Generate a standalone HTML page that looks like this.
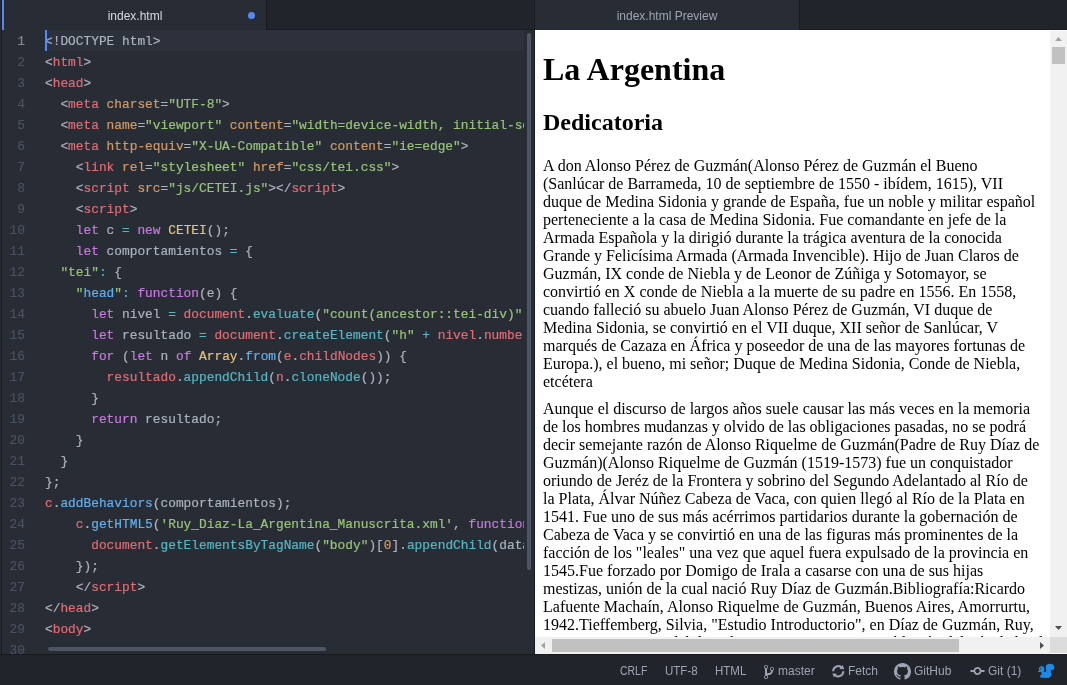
<!DOCTYPE html>
<html><head><meta charset="utf-8">
<style>
*{box-sizing:border-box}
html,body{margin:0;padding:0}
body{width:1067px;height:685px;overflow:hidden;background:#21252b;position:relative;font-family:"Liberation Sans",sans-serif}
.abs{position:absolute;will-change:transform}
#lstrip{left:0;top:0;width:2px;height:654px;background:#262a30;border-right:1px solid #1b1d22}
#tabbarL{left:2px;top:0;width:532px;height:30px;background:#21252b;border-bottom:1px solid #181a1f}
#tabL{left:2px;top:0;width:265px;height:30px;background:#282c34;border-right:1px solid #181a1f}
#tabLbar{left:2px;top:0;width:2px;height:30px;background:#568af2}
#tabLtxt{left:2.5px;width:264px;top:9px;text-align:center;color:#d7dae0;font-size:12px;line-height:14px}
#dot{left:247.5px;top:12px;width:7px;height:7px;border-radius:50%;background:#568af2}
#editor{left:2px;top:30px;width:532px;height:624px;background:#282c34;overflow:hidden}
#gutter{left:0;top:1px;width:23px;text-align:right;font-family:"Liberation Mono",monospace;font-size:12.83px;line-height:21px;color:#4b5263;-webkit-text-stroke:0.15px}
#gutter .gn.cur{color:#868c97}
#curline{left:43px;top:0;width:479px;height:21px;background:#2c313c}
#code{left:43px;top:1px;width:479px;height:624px;overflow:hidden;white-space:pre;font-family:"Liberation Mono",monospace;font-size:12.83px;line-height:21px;color:#abb2bf;-webkit-text-stroke:0.2px}
#cursor{left:43px;top:0;width:2px;height:21px;background:#528bff}
#vthumb{left:525px;top:3px;width:4px;height:537px;border-radius:2px;background:#4e5565}
#hthumb{left:46px;top:617px;width:278px;height:4px;border-radius:2px;background:#4e5565}
#divider{left:534px;top:0;width:1px;height:654px;background:#181a1f}
#tabbarR{left:535px;top:0;width:532px;height:30px;background:#21252b;border-bottom:1px solid #181a1f}
#tabR{left:535px;top:0;width:265px;height:30px;background:#282c34;border-right:1px solid #181a1f}
#tabRtxt{left:535px;width:264px;top:9px;text-align:center;color:#9da5b4;font-size:12px;line-height:14px}
#preview{left:535px;top:30px;width:532px;height:624px;background:#fff;overflow:hidden;font-family:"Liberation Serif",serif;color:#000}
#h1{left:8px;top:21px;font-size:32px;font-weight:bold;line-height:37px;white-space:nowrap}
#h2{left:8px;top:78px;font-size:24px;font-weight:bold;line-height:28px;white-space:nowrap}
.pl{position:absolute;left:0;white-space:nowrap;font-size:16px;line-height:18px}
#p1{left:8px;top:127px}
#p2{left:8px;top:370px}
#vsb{left:515px;top:1px;width:17px;height:606px;background:#f1f1f1}
#vsbthumb{left:517px;top:17px;width:13px;height:17px;background:#c1c1c1}
#hsb{left:0px;top:607px;width:515px;height:17px;background:#f1f1f1}
#hsbthumb{left:17px;top:609px;width:407px;height:13px;background:#c1c1c1}
#corner{left:515px;top:607px;width:17px;height:16px;background:#dcdcdc}
#status{left:0;top:654px;width:1067px;height:31px;background:#21252b;border-top:1px solid #181a1f;color:#9da5b4;font-size:12px}
.st{position:absolute;top:9px;line-height:14px;white-space:nowrap}
</style></head><body>
<div id="lstrip" class="abs"></div>
<div id="tabbarL" class="abs"></div>
<div id="tabL" class="abs"></div>
<div id="tabLbar" class="abs"></div>
<div id="tabLtxt" class="abs">index.html</div>
<div id="dot" class="abs"></div>
<div id="editor" class="abs">
  <div id="gutter" class="abs"><div class="gn cur">1</div><div class="gn">2</div><div class="gn">3</div><div class="gn">4</div><div class="gn">5</div><div class="gn">6</div><div class="gn">7</div><div class="gn">8</div><div class="gn">9</div><div class="gn">10</div><div class="gn">11</div><div class="gn">12</div><div class="gn">13</div><div class="gn">14</div><div class="gn">15</div><div class="gn">16</div><div class="gn">17</div><div class="gn">18</div><div class="gn">19</div><div class="gn">20</div><div class="gn">21</div><div class="gn">22</div><div class="gn">23</div><div class="gn">24</div><div class="gn">25</div><div class="gn">26</div><div class="gn">27</div><div class="gn">28</div><div class="gn">29</div><div class="gn">30</div></div>
  <div id="curline" class="abs"></div>
  <div id="code" class="abs"><div class="ln cur">&lt;!DOCTYPE html&gt;</div><div class="ln">&lt;<span style="color:#e06c75">html</span>&gt;</div><div class="ln">&lt;<span style="color:#e06c75">head</span>&gt;</div><div class="ln">  &lt;<span style="color:#e06c75">meta</span> <span style="color:#d19a66">charset</span>=<span style="color:#98c379">&quot;UTF-8&quot;</span>&gt;</div><div class="ln">  &lt;<span style="color:#e06c75">meta</span> <span style="color:#d19a66">name</span>=<span style="color:#98c379">&quot;viewport&quot;</span> <span style="color:#d19a66">content</span>=<span style="color:#98c379">&quot;width=device-width, initial-scale=1.0&quot;</span>&gt;</div><div class="ln">  &lt;<span style="color:#e06c75">meta</span> <span style="color:#d19a66">http-equiv</span>=<span style="color:#98c379">&quot;X-UA-Compatible&quot;</span> <span style="color:#d19a66">content</span>=<span style="color:#98c379">&quot;ie=edge&quot;</span>&gt;</div><div class="ln">    &lt;<span style="color:#e06c75">link</span> <span style="color:#d19a66">rel</span>=<span style="color:#98c379">&quot;stylesheet&quot;</span> <span style="color:#d19a66">href</span>=<span style="color:#98c379">&quot;css/tei.css&quot;</span>&gt;</div><div class="ln">    &lt;<span style="color:#e06c75">script</span> <span style="color:#d19a66">src</span>=<span style="color:#98c379">&quot;js/CETEI.js&quot;</span>&gt;&lt;/<span style="color:#e06c75">script</span>&gt;</div><div class="ln">    &lt;<span style="color:#e06c75">script</span>&gt;</div><div class="ln">    <span style="color:#c678dd">let</span> c <span style="color:#56b6c2">=</span> <span style="color:#c678dd">new</span> <span style="color:#e5c07b">CETEI</span>();</div><div class="ln">    <span style="color:#c678dd">let</span> comportamientos <span style="color:#56b6c2">=</span> {</div><div class="ln">  <span style="color:#98c379">&quot;tei&quot;</span><span style="color:#56b6c2">:</span> {</div><div class="ln">    <span style="color:#98c379">&quot;</span><span style="color:#61afef">head</span><span style="color:#98c379">&quot;</span><span style="color:#56b6c2">:</span> <span style="color:#c678dd">function</span>(e) {</div><div class="ln">      <span style="color:#c678dd">let</span> nivel <span style="color:#56b6c2">=</span> <span style="color:#e06c75">document</span>.<span style="color:#56b6c2">evaluate</span>(<span style="color:#98c379">&quot;count(ancestor::tei-div)&quot;</span>, this, null, XPathResult.ANY_TYPE, null);</div><div class="ln">      <span style="color:#c678dd">let</span> resultado <span style="color:#56b6c2">=</span> <span style="color:#e06c75">document</span>.<span style="color:#56b6c2">createElement</span>(<span style="color:#98c379">&quot;h&quot;</span> <span style="color:#56b6c2">+</span> <span style="color:#e06c75">nivel</span>.<span style="color:#e06c75">numberValue</span>);</div><div class="ln">      <span style="color:#c678dd">for</span> (<span style="color:#c678dd">let</span> n <span style="color:#c678dd">of</span> <span style="color:#e5c07b">Array</span>.<span style="color:#61afef">from</span>(<span style="color:#e06c75">e</span>.<span style="color:#e06c75">childNodes</span>)) {</div><div class="ln">        <span style="color:#e06c75">resultado</span>.<span style="color:#56b6c2">appendChild</span>(<span style="color:#e06c75">n</span>.<span style="color:#56b6c2">cloneNode</span>());</div><div class="ln">      }</div><div class="ln">      <span style="color:#c678dd">return</span> resultado;</div><div class="ln">    }</div><div class="ln">  }</div><div class="ln">};</div><div class="ln"><span style="color:#e06c75">c</span>.<span style="color:#61afef">addBehaviors</span>(comportamientos);</div><div class="ln">    <span style="color:#e06c75">c</span>.<span style="color:#61afef">getHTML5</span>(<span style="color:#98c379">&#x27;Ruy_Diaz-La_Argentina_Manuscrita.xml&#x27;</span>, <span style="color:#c678dd">function</span>(data) {</div><div class="ln">      <span style="color:#e06c75">document</span>.<span style="color:#56b6c2">getElementsByTagName</span>(<span style="color:#98c379">&quot;body&quot;</span>)[<span style="color:#d19a66">0</span>].<span style="color:#56b6c2">appendChild</span>(data);</div><div class="ln">    });</div><div class="ln">    &lt;/<span style="color:#e06c75">script</span>&gt;</div><div class="ln">&lt;/<span style="color:#e06c75">head</span>&gt;</div><div class="ln">&lt;<span style="color:#e06c75">body</span>&gt;</div><div class="ln"></div></div>
  <div id="cursor" class="abs"></div>
  <div id="vthumb" class="abs"></div>
  <div id="hthumb" class="abs"></div>
</div>
<div id="divider" class="abs"></div>
<div id="tabbarR" class="abs"></div>
<div id="tabR" class="abs"></div>
<div id="tabRtxt" class="abs">index.html Preview</div>
<div id="preview" class="abs">
  <div id="h1" class="abs">La Argentina</div>
  <div id="h2" class="abs">Dedicatoria</div>
  <div id="p1" class="abs"><div class="pl" style="top:0px">A don Alonso Pérez de Guzmán(Alonso Pérez de Guzmán el Bueno</div><div class="pl" style="top:18px">(Sanlúcar de Barrameda, 10 de septiembre de 1550 - ibídem, 1615), VII</div><div class="pl" style="top:36px">duque de Medina Sidonia y grande de España, fue un noble y militar español</div><div class="pl" style="top:54px">perteneciente a la casa de Medina Sidonia. Fue comandante en jefe de la</div><div class="pl" style="top:72px">Armada Española y la dirigió durante la trágica aventura de la conocida</div><div class="pl" style="top:90px">Grande y Felicísima Armada (Armada Invencible). Hijo de Juan Claros de</div><div class="pl" style="top:108px">Guzmán, IX conde de Niebla y de Leonor de Zúñiga y Sotomayor, se</div><div class="pl" style="top:126px">convirtió en X conde de Niebla a la muerte de su padre en 1556. En 1558,</div><div class="pl" style="top:144px">cuando falleció su abuelo Juan Alonso Pérez de Guzmán, VI duque de</div><div class="pl" style="top:162px">Medina Sidonia, se convirtió en el VII duque, XII señor de Sanlúcar, V</div><div class="pl" style="top:180px">marqués de Cazaza en África y poseedor de una de las mayores fortunas de</div><div class="pl" style="top:198px">Europa.), el bueno, mi señor; Duque de Medina Sidonia, Conde de Niebla,</div><div class="pl" style="top:216px">etcétera</div></div>
  <div id="p2" class="abs"><div class="pl" style="top:0px">Aunque el discurso de largos años suele causar las más veces en la memoria</div><div class="pl" style="top:18px">de los hombres mudanzas y olvido de las obligaciones pasadas, no se podrá</div><div class="pl" style="top:36px">decir semejante razón de Alonso Riquelme de Guzmán(Padre de Ruy Díaz de</div><div class="pl" style="top:54px">Guzmán)(Alonso Riquelme de Guzmán (1519-1573) fue un conquistador</div><div class="pl" style="top:72px">oriundo de Jeréz de la Frontera y sobrino del Segundo Adelantado al Río de</div><div class="pl" style="top:90px">la Plata, Álvar Núñez Cabeza de Vaca, con quien llegó al Río de la Plata en</div><div class="pl" style="top:108px">1541. Fue uno de sus más acérrimos partidarios durante la gobernación de</div><div class="pl" style="top:126px">Cabeza de Vaca y se convirtió en una de las figuras más prominentes de la</div><div class="pl" style="top:144px">facción de los &quot;leales&quot; una vez que aquel fuera expulsado de la provincia en</div><div class="pl" style="top:162px">1545.Fue forzado por Domigo de Irala a casarse con una de sus hijas</div><div class="pl" style="top:180px">mestizas, unión de la cual nació Ruy Díaz de Guzmán.Bibliografía:Ricardo</div><div class="pl" style="top:198px">Lafuente Machaín, Alonso Riquelme de Guzmán, Buenos Aires, Amorrurtu,</div><div class="pl" style="top:216px">1942.Tieffemberg, Silvia, &quot;Estudio Introductorio&quot;, en Díaz de Guzmán, Ruy,</div><div class="pl" style="top:234px">Argentina. Historia del descubrimiento, conquista y población del Río de la Plata</div></div>
  <div id="vsb" class="abs"></div>
  <div id="vsbthumb" class="abs"></div>
  <div id="hsb" class="abs"></div>
  <div id="hsbthumb" class="abs"></div>
  <div id="corner" class="abs"></div>
  <svg class="abs" style="left:0;top:0" width="532" height="624"><path d="M523.5 7L527 11H520Z" fill="#a3a3a3"/><path d="M520 596H527L523.5 600Z" fill="#505050"/><path d="M6 615.5L10 612V619Z" fill="#a3a3a3"/><path d="M505 612L509 615.5L505 619Z" fill="#505050"/></svg>
</div>
<div id="status" class="abs">
  <span class="st" style="left:620px;transform:scaleX(0.87);transform-origin:0 0">CRLF</span>
  <span class="st" style="left:665px;transform:scaleX(0.96);transform-origin:0 0">UTF-8</span>
  <span class="st" style="left:715px;transform:scaleX(0.96);transform-origin:0 0">HTML</span>
  <svg class="abs" style="left:763.5px;top:8.5px" width="10" height="16" viewBox="0 0 10 16"><path fill="#9da5b4" d="M10 5c0-1.11-.89-2-2-2a1.993 1.993 0 0 0-1 3.72v.3c-.02.52-.23.98-.63 1.38-.4.4-.86.61-1.38.63-.83.02-1.48.16-2 .45V4.72a1.993 1.993 0 0 0-1-3.72C.88 1 0 1.89 0 3a2 2 0 0 0 1 1.72v6.56c-.59.35-1 .99-1 1.72 0 1.11.89 2 2 2 1.11 0 2-.89 2-2 0-.53-.2-1-.53-1.36.09-.06.48-.41.59-.47.25-.11.56-.17.94-.17 1.05-.05 1.95-.45 2.75-1.25S8.95 7.770 9 6.73h-.02C9.59 6.37 10 5.730 10 5zM2 1.8c.66 0 1.2.55 1.2 1.2 0 .65-.55 1.2-1.2 1.2C1.35 4.2.8 3.65.8 3c0-.65.55-1.2 1.2-1.2zm0 12.41c-.66 0-1.2-.55-1.2-1.2 0-.65.55-1.2 1.2-1.2.65 0 1.2.55 1.2 1.2 0 .65-.55 1.2-1.2 1.2zm6-8c-.66 0-1.2-.55-1.2-1.2 0-.65.55-1.2 1.2-1.2.65 0 1.2.55 1.2 1.2 0 .65-.55 1.2-1.2 1.2z"/></svg>
  <span class="st" style="left:778px">master</span>
  <svg class="abs" style="left:831.7px;top:9.7px" width="13" height="13" viewBox="0 0 13 13"><g fill="none" stroke="#9da5b4" stroke-width="2"><path d="M1.15 6.25A5.1 5.1 0 0 1 10.16 2.97"/><path d="M11.35 6.25A5.1 5.1 0 0 1 2.34 9.53"/></g><g fill="#9da5b4"><path d="M10.6 0.1L12.2 4.2L7.4 4.0Z"/><path d="M0.39 8.56L1.85 12.2L5.06 8.86Z"/></g></svg>
  <span class="st" style="left:848px">Fetch</span>
  <svg class="abs" style="left:893.8px;top:8.1px" width="17" height="17" viewBox="0 0 16 16"><path fill="#9da5b4" d="M8 0C3.58 0 0 3.58 0 8c0 3.54 2.29 6.53 5.47 7.59.4.07.55-.17.55-.38 0-.19-.01-.82-.01-1.49-2.01.37-2.53-.49-2.69-.94-.09-.23-.48-.94-.82-1.13-.28-.15-.68-.52-.01-.53.63-.01 1.08.58 1.23.82.72 1.21 1.87.87 2.330.66.07-.52.28-.87.51-1.07-1.780-.2-3.640-.89-3.640-3.95 0-.87.31-1.59.82-2.15-.08-.2-.36-1.02.08-2.12 0 0 .67-.21 2.2.82.64-.18 1.32-.27 2-.27.68 0 1.36.09 2 .27 1.53-1.04 2.2-.82 2.2-.82.44 1.1.16 1.92.08 2.12.51.56.82 1.27.82 2.15 0 3.07-1.87 3.75-3.65 3.95.29.25.54.73.54 1.48 0 1.07-.01 1.93-.01 2.2 0 .21.15.46.55.38A8.013 8.013 0 0 0 16 8c0-4.42-3.58-8-8-8z"/></svg>
  <span class="st" style="left:914px">GitHub</span>
  <svg class="abs" style="left:970px;top:8px" width="15" height="16" viewBox="0 0 14 16"><path fill="#9da5b4" d="M10.86 7c-.45-1.72-2-3-3.86-3-1.86 0-3.41 1.28-3.86 3H0v2h3.14c.45 1.72 2 3 3.86 3 1.86 0 3.41-1.28 3.86-3H14V7h-3.14zM7 10.2c-1.22 0-2.2-.98-2.2-2.2 0-1.22.98-2.2 2.2-2.2 1.22 0 2.2.98 2.2 2.2 0 1.22-.98 2.2-2.2 2.2z"/></svg>
  <span class="st" style="left:988px">Git (1)</span>
  <svg class="abs" style="left:1037px;top:8px" width="18" height="16" viewBox="0 0 18 16"><g fill="#1b8ae8"><ellipse cx="13" cy="4.3" rx="4.3" ry="3.6"/><path d="M9.2 5L13.5 6.5L14.5 11.5L9 11Z"/><ellipse cx="9.5" cy="11.8" rx="5" ry="3"/><rect x="3.3" y="12" width="9" height="2.7"/><circle cx="4.6" cy="6.1" r="2.8"/><path d="M3.8 3.6L4.6 2.6L5.6 3.6Z"/><ellipse cx="2.2" cy="8.4" rx="1.5" ry="0.6"/><path d="M4 7L8 9L5 13Z"/></g><circle cx="14.8" cy="7.8" r="1.1" fill="#21252b"/><circle cx="3.6" cy="5.5" r="0.55" fill="#21252b"/></svg>
</div>
</body></html>
